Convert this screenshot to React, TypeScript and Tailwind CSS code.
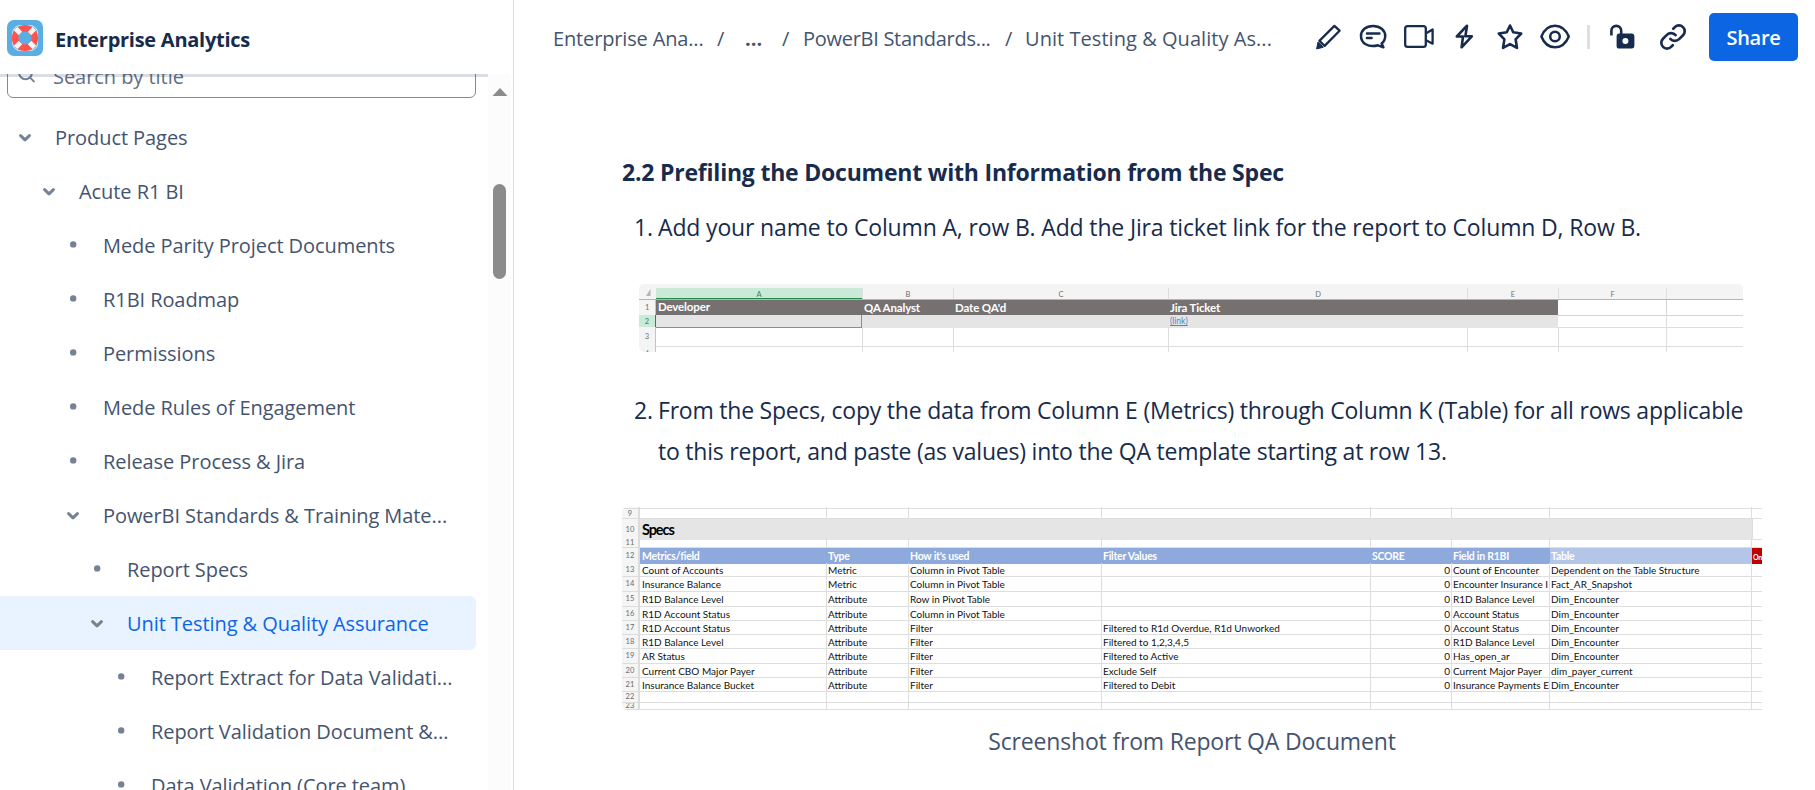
import React from "react";

type TreeNode = { label: string; kind: "open" | "leaf"; pad: string; active?: boolean };

const tree: TreeNode[] = [
  { label: "Product Pages", kind: "open", pad: "pl-[13px]" },
  { label: "Acute R1 BI", kind: "open", pad: "pl-[37px]" },
  { label: "Mede Parity Project Documents", kind: "leaf", pad: "pl-[61px]" },
  { label: "R1BI Roadmap", kind: "leaf", pad: "pl-[61px]" },
  { label: "Permissions", kind: "leaf", pad: "pl-[61px]" },
  { label: "Mede Rules of Engagement", kind: "leaf", pad: "pl-[61px]" },
  { label: "Release Process & Jira", kind: "leaf", pad: "pl-[61px]" },
  { label: "PowerBI Standards & Training Mate...", kind: "open", pad: "pl-[61px]" },
  { label: "Report Specs", kind: "leaf", pad: "pl-[85px]" },
  { label: "Unit Testing & Quality Assurance", kind: "open", pad: "pl-[85px]", active: true },
  { label: "Report Extract for Data Validati...", kind: "leaf", pad: "pl-[109px]" },
  { label: "Report Validation Document &...", kind: "leaf", pad: "pl-[109px]" },
  { label: "Data Validation (Core team)", kind: "leaf", pad: "pl-[109px]" },
];

function Marker({ kind }: { kind: "open" | "leaf" }) {
  return (
    <svg viewBox="0 0 24 24" className="h-6 w-6 shrink-0" fill="none">
      {kind === "open" ? (
        <path d="M7.6 10.6 L12 14.8 L16.4 10.6" stroke="#758195" strokeWidth="3" strokeLinecap="round" strokeLinejoin="round" />
      ) : (
        <circle cx="12.2" cy="11.4" r="3.2" fill="#758195" />
      )}
    </svg>
  );
}

function Lifebuoy() {
  return (
    <svg viewBox="0 0 36 36" className="h-9 w-9 shrink-0">
      <rect width="36" height="36" rx="7" fill="#59afe1" />
      <rect x="5.6" y="5.6" width="25" height="25" rx="7.5" fill="none" stroke="#e4f2fb" strokeWidth="0.9" />
      <circle cx="18" cy="18" r="9.8" fill="none" stroke="#ff5350" strokeWidth="6.6" />
      <g stroke="#f7f3f3" strokeWidth="5">
        <path d="M8.6 8.6 L13.4 13.4" />
        <path d="M27.4 8.6 L22.6 13.4" />
        <path d="M8.6 27.4 L13.4 22.6" />
        <path d="M27.4 27.4 L22.6 22.6" />
      </g>
    </svg>
  );
}

function Sidebar() {
  return (
    <aside className="flex h-[790px] w-[514px] shrink-0 flex-col border-r border-[#dcdfe4]">
      <div className="flex h-[74px] shrink-0 items-center gap-[12px] pt-[2px] pl-[7px]">
        <Lifebuoy />
        <span className="pt-[3px] text-[20px] font-bold tracking-[-0.26px] text-[#172b4d]">Enterprise Analytics</span>
      </div>
      <div className="flex min-h-0 flex-1">
        <div className="relative flex w-[488px] flex-col overflow-hidden">
          <div className="absolute inset-x-0 top-0 h-[3px] bg-[#091e42]/15" />
          <div className="-mt-[25px] ml-[7px] flex h-[49px] w-[469px] shrink-0 items-center rounded-[6px] border border-[#7f8a9d]">
            <svg viewBox="0 0 24 24" className="ml-[7px] h-6 w-6" fill="none" stroke="#758195" strokeWidth="2" strokeLinecap="round">
              <circle cx="10.5" cy="10.8" r="6.4" />
              <path d="M15.2 15.6 L18.8 19.4" />
            </svg>
            <span className="ml-[14px] pt-[6px] text-[20px] tracking-[-0.05px] text-[#626f86]">Search by title</span>
          </div>
          <div className="mt-[12px] flex flex-col">
            {tree.map((n) => (
              <div
                key={n.label}
                className={`flex h-[54px] w-[476px] shrink-0 items-center rounded-r-[6px] ${n.pad} ${n.active ? "bg-[#e9f2ff] text-[#0c66e4]" : "text-[#44546f]"}`}
              >
                <Marker kind={n.kind} />
                <span className="ml-[18px] pt-[2px] text-[20px] tracking-[-0.07px] whitespace-nowrap">{n.label}</span>
              </div>
            ))}
          </div>
        </div>
        <div className="flex w-[23px] flex-col items-center bg-[#fcfcfc] pt-[14px]">
          <svg viewBox="0 0 16 8" className="h-2 w-4">
            <path d="M8 0 L15.5 8 L0.5 8 Z" fill="#8b8b8b" />
          </svg>
          <div className="mt-[88px] h-[95px] w-[13px] rounded-full bg-[#8b8b8b]" />
        </div>
      </div>
    </aside>
  );
}

function Toolbar() {
  return (
    <div className="flex items-center text-[#172b4d]">
      <svg viewBox="1314 22.5 30 30" className="h-[30px] w-[30px]" fill="none" stroke="currentColor" strokeWidth="2.3" strokeLinejoin="round">
        <path d="M1334.4 26.4 L1339.6 31.2 L1324.6 46.4 L1319.4 41.4 Z" />
        <path d="M1318 42.6 L1323.2 47.8 L1316.6 49.4 Z" fill="currentColor" strokeWidth="1" />
      </svg>
      <svg viewBox="1357 22.5 32 30" className="ml-[13px] h-[30px] w-[32px]" fill="none" stroke="currentColor" strokeWidth="2.5" strokeLinecap="round" strokeLinejoin="round">
        <path d="M1383.4 47.8 L1378 45.8 C1368 48.6 1361 43.4 1361 36.4 C1361 30.6 1366 26.4 1373 26.4 C1380 26.4 1385.2 30.6 1385.2 36.4 C1385.2 39.6 1384 42 1381.6 44 Z" />
        <path d="M1367 34 H1379.4 M1367 38.6 H1371.6" />
      </svg>
      <svg viewBox="1402 22.5 34 30" className="ml-[13px] h-[30px] w-[34px]" fill="none" stroke="currentColor" strokeWidth="2.3" strokeLinejoin="round">
        <rect x="1405.2" y="26.6" width="20.6" height="20.8" rx="2.4" />
        <path d="M1426.6 33.6 L1432.6 30 V44.2 L1426.6 41" />
      </svg>
      <svg viewBox="1453 22.5 22 30" className="ml-[17px] h-[30px] w-[22px]" fill="none" stroke="currentColor" strokeWidth="2.6" strokeLinejoin="round">
        <path d="M1467 26.2 L1456.8 37 H1463 L1461.6 47.8 L1471.8 36.8 H1465.4 Z" />
      </svg>
      <svg viewBox="1495 22.5 30 30" className="ml-[20px] h-[30px] w-[30px]" fill="none" stroke="currentColor" strokeWidth="2.6" strokeLinejoin="round">
        <path d="M1510 26 L1513.2 32.8 L1521.2 34 L1515.6 39.8 L1517 48.4 L1510 44.6 L1503 48.4 L1504.4 39.8 L1498.8 34 L1506.8 32.8 Z" />
      </svg>
      <svg viewBox="1538 22.5 34 30" className="ml-[13px] h-[30px] w-[34px]" fill="none" stroke="currentColor" strokeWidth="2.5">
        <path d="M1541.4 37 C1544 30.4 1549 26.2 1555 26.2 C1561 26.2 1566 30.4 1568.8 37 C1566 43.8 1561 47.8 1555 47.8 C1549 47.8 1544 43.8 1541.4 37 Z" strokeLinejoin="round" />
        <circle cx="1555" cy="37" r="4.8" />
      </svg>
      <div className="ml-[15px] h-6 w-[3px] bg-[#dcdfe4]" />
      <svg viewBox="1608 22.5 30 30" className="ml-[18px] h-[30px] w-[30px]" fill="none" stroke="currentColor" strokeWidth="2.6">
        <path d="M1611.4 36 V31.2 A4.9 4.9 0 0 1 1621.2 31.2 V35" />
        <path d="M1618.8 34 H1632 A2.6 2.6 0 0 1 1634.4 36.4 V46.4 A2.6 2.6 0 0 1 1632 49 H1619.2 A2.6 2.6 0 0 1 1616.6 46.4 V36.4 A2.6 2.6 0 0 1 1618.8 34 Z M1625.4 38.5 A3 3 0 1 0 1625.4 44.5 A3 3 0 1 0 1625.4 38.5 Z" fill="currentColor" stroke="none" fillRule="evenodd" />
      </svg>
      <svg viewBox="0 0 24 24" className="ml-[19px] h-[32px] w-[32px]" fill="none" stroke="currentColor" strokeWidth="2" strokeLinecap="round">
        <path d="M10 13.4a4.6 4.6 0 0 0 6.6.2l2.9-2.9a4.3 4.3 0 0 0-6.1-6.1l-1.2 1.2" />
        <path d="M14 10.6a4.6 4.6 0 0 0-6.6-.2l-2.9 2.9a4.3 4.3 0 0 0 6.1 6.1l1.2-1.2" />
      </svg>
      <button className="ml-[20px] h-[48px] w-[89px] rounded-[5px] bg-[#0c66e4] pt-[2px] text-[20px] font-semibold tracking-[-0.3px] text-white">Share</button>
    </div>
  );
}

function TopBar() {
  return (
    <div className="flex h-[74px] shrink-0 items-center justify-between pr-[17px] pl-[39px]">
      <div className="flex items-center pt-[3px] text-[20px] whitespace-nowrap text-[#44546f]">
        <span className="w-[164px] tracking-[-0.15px]">Enterprise Ana...</span>
        <span className="w-[28px]">/</span>
        <span className="w-[37px] font-bold">...</span>
        <span className="w-[21px]">/</span>
        <span className="w-[202px] tracking-[-0.28px]">PowerBI Standards...</span>
        <span className="w-[20px]">/</span>
        <span className="tracking-[0.05px]">Unit Testing &amp; Quality As...</span>
      </div>
      <Toolbar />
    </div>
  );
}

const sheetACols = "grid grid-cols-[17px_206px_91px_215px_299px_91px_108px_1fr]";

function SheetA() {
  return (
    <div className="ml-[17px] flex h-[68px] w-[1104px] flex-col overflow-hidden rounded-[5px] bg-white font-[Lato,sans-serif]">
      <div className={`${sheetACols} h-[16px] border-b border-[#b5b5b5] bg-[#f4f4f4] pt-[4px] text-center text-[7.5px] leading-[13px] text-[#707070]`}>
        <svg viewBox="0 0 17 11" className="h-[11px] w-[17px]">
          <path d="M11.5 1 V8 H7 Z" fill="#b5b5b5" />
        </svg>
        <span className="h-[11px] border-b border-[#1f8b4d] bg-[#c9ead7] text-[#3f7f5c]">A</span>
        {["B", "C", "D", "E", "F", ""].map((c, i) => (
          <span key={i} className="h-[11px] border-l border-[#dedede]">{c}</span>
        ))}
      </div>
      <div className={`${sheetACols} h-[15px] text-[11.5px] leading-[16px] font-bold tracking-[-0.15px] text-white`}>
        <span className="border-r border-[#c4c4c4] bg-[#f4f4f4] text-center text-[7.5px] font-normal text-[#707070]">1</span>
        <span className="border-b border-[#1f8b4d] bg-[#767171] pl-[2px] leading-[14px]">Developer</span>
        <span className="bg-[#767171] pl-[2px]">QA Analyst</span>
        <span className="bg-[#767171] pl-[2px]">Date QA'd</span>
        <span className="bg-[#767171] pl-[2px]">Jira Ticket</span>
        <span className="bg-[#767171]" />
        <span className="border-b border-[#d4d4d4]" />
        <span className="border-b border-l border-[#d4d4d4]" />
      </div>
      <div className={`${sheetACols} h-[12px] text-[8.5px] leading-[14px]`}>
        <span className="border-r border-[#1f8b4d] bg-[#c9ead7] text-center text-[7.5px] leading-[13px] text-[#3f7f5c]">2</span>
        <span className="border-r border-b border-[#5ea67e] bg-[#e5e5e5]" />
        <span className="bg-[#e5e5e5]" />
        <span className="bg-[#e5e5e5]" />
        <span className="bg-[#e5e5e5] pl-[2px] leading-[13px] text-[#4a86cf] underline">(link)</span>
        <span className="bg-[#e5e5e5]" />
        <span className="border-b border-[#dedede]" />
        <span className="border-b border-l border-[#dedede]" />
      </div>
      <div className={`${sheetACols} h-[18px] text-[7.5px] leading-[20px]`}>
        <span className="border-r border-[#c4c4c4] bg-[#f4f4f4] text-center text-[#707070]">3</span>
        <span className="border-b border-[#dedede]" />
        {[0, 1, 2, 3, 4, 5].map((i) => (
          <span key={i} className="border-b border-l border-[#dedede]" />
        ))}
      </div>
      <div className={`${sheetACols} h-[7px] text-[7px] leading-[16px]`}>
        <span className="h-[7px] overflow-hidden border-r border-[#c4c4c4] bg-[#f4f4f4] text-center text-[#707070]">4</span>
        <span />
        {[0, 1, 2, 3, 4, 5].map((i) => (
          <span key={i} className="border-l border-[#dedede]" />
        ))}
      </div>
    </div>
  );
}

const sheetBCols = "grid grid-cols-[18px_187px_82px_193px_269px_81px_98px_202px_10px]";

type SpecRow = { n: number; h: string; cells: string[] };

const specs: SpecRow[] = [
  { n: 13, h: "h-[14px]", cells: ["Count of Accounts", "Metric", "Column in Pivot Table", "", "0", "Count of Encounter", "Dependent on the Table Structure", ""] },
  { n: 14, h: "h-[15px]", cells: ["Insurance Balance", "Metric", "Column in Pivot Table", "", "0", "Encounter Insurance I", "Fact_AR_Snapshot", ""] },
  { n: 15, h: "h-[15px]", cells: ["R1D Balance Level", "Attribute", "Row in Pivot Table", "", "0", "R1D Balance Level", "Dim_Encounter", ""] },
  { n: 16, h: "h-[14px]", cells: ["R1D Account Status", "Attribute", "Column in Pivot Table", "", "0", "Account Status", "Dim_Encounter", ""] },
  { n: 17, h: "h-[14px]", cells: ["R1D Account Status", "Attribute", "Filter", "Filtered to R1d Overdue, R1d Unworked", "0", "Account Status", "Dim_Encounter", ""] },
  { n: 18, h: "h-[14px]", cells: ["R1D Balance Level", "Attribute", "Filter", "Filtered to 1,2,3,4,5", "0", "R1D Balance Level", "Dim_Encounter", ""] },
  { n: 19, h: "h-[15px]", cells: ["AR Status", "Attribute", "Filter", "Filtered to Active", "0", "Has_open_ar", "Dim_Encounter", ""] },
  { n: 20, h: "h-[14px]", cells: ["Current CBO Major Payer", "Attribute", "Filter", "Exclude Self", "0", "Current Major Payer", "dim_payer_current", ""] },
  { n: 21, h: "h-[14px]", cells: ["Insurance Balance Bucket", "Attribute", "Filter", "Filtered to Debit", "0", "Insurance Payments E", "Dim_Encounter", ""] },
  { n: 22, h: "h-[11px]", cells: ["", "", "", "", "", "", "", ""] },
  { n: 23, h: "h-[7px]", cells: ["", "", "", "", "", "", "", ""] },
];

function RowNumber({ n }: { n: React.ReactNode }) {
  return (
    <span className="flex items-center justify-center overflow-hidden border-r-2 border-b border-[#dcdcdc] bg-[#f5f5f5] text-[7.5px] tracking-[0.2px] text-[#6b6b6b]">{n}</span>
  );
}

function EmptyCells() {
  return (
    <>
      {[0, 1, 2, 3, 4, 5, 6].map((i) => (
        <span key={i} className="border-r border-b border-[#dedede]" />
      ))}
      <span className="border-b border-[#dedede]" />
    </>
  );
}

function SheetB() {
  return (
    <div className="flex h-[203px] w-[1140px] flex-col overflow-hidden rounded-l-[5px] bg-white font-[Lato,sans-serif]">
      <div className={`${sheetBCols} h-[2px]`}>
        <RowNumber n="" />
        <EmptyCells />
      </div>
      <div className={`${sheetBCols} h-[10px]`}>
        <RowNumber n={9} />
        <EmptyCells />
      </div>
      <div className={`${sheetBCols} h-[19px]`}>
        <RowNumber n={10} />
        <span className="col-span-7 bg-[#e5e5e5] pl-[2px] text-[14.5px] leading-[21px] font-bold tracking-[-1.1px] text-black">Specs</span>
        <span className="border-b border-l border-[#dedede]" />
      </div>
      <div className={`${sheetBCols} h-[10px]`}>
        <RowNumber n={11} />
        <EmptyCells />
      </div>
      <div className={`${sheetBCols} h-[15px] text-[10.5px] leading-[16px] font-bold tracking-[-0.25px] text-white`}>
        <RowNumber n={<span className="font-normal">12</span>} />
        <span className="bg-[#8ea9db] pl-[2px]">Metrics/field</span>
        {["Type", "How it's used", "Filter Values", "SCORE", "Field in R1BI"].map((t) => (
          <span key={t} className="bg-[#8ea9db] pl-[1px]">{t}</span>
        ))}
        <span className="bg-[#b4c6e7] pl-[1px]">Table</span>
        <span className="overflow-hidden bg-[#c00000] pl-[1px] text-[7px] leading-[19px] whitespace-nowrap">On</span>
      </div>
      {specs.map((r) => (
        <div key={r.n} className={`${sheetBCols} ${r.h} text-[10px] leading-[14px] text-[#111111]`}>
          <RowNumber n={r.n} />
          {r.cells.map((c, i) => (
            <span
              key={i}
              className={`overflow-hidden border-b border-[#dedede] whitespace-nowrap ${i < 7 ? "border-r" : ""} ${i === 4 ? "pr-[1px] text-right" : i === 0 ? "pl-[2px]" : "pl-[1px]"}`}
            >
              {c}
            </span>
          ))}
        </div>
      ))}
    </div>
  );
}

export default function App() {
  return (
    <div className="flex h-[790px] w-[1815px] overflow-hidden bg-white font-['Open_Sans',sans-serif]">
      <Sidebar />
      <main className="flex min-w-0 flex-1 flex-col">
        <TopBar />
        <article className="flex flex-col pl-[108px] text-[23px] leading-[41px] whitespace-nowrap text-[#172b4d]">
          <h3 className="mt-[78px] text-[23px] font-bold tracking-[-0.21px]">2.2 Prefiling the Document with Information from the Spec</h3>
          <div className="mt-[14px] flex pl-[12px] tracking-[-0.155px]">
            <span className="w-[24px]">1.</span>
            <span>Add your name to Column A, row B. Add the Jira ticket link for the report to Column D, Row B.</span>
          </div>
          <div className="mt-[36px]">
            <SheetA />
          </div>
          <div className="mt-[38px] flex pl-[12px] tracking-[-0.22px]">
            <span className="w-[24px]">2.</span>
            <span>
              From the Specs, copy the data from Column E (Metrics) through Column K (Table) for all rows applicable
              <br />
              to this report, and paste (as values) into the QA template starting at row 13.
            </span>
          </div>
          <div className="mt-[35px]">
            <SheetB />
          </div>
          <p className="mt-[11px] w-[1140px] text-center tracking-[-0.18px] text-[#44546f]">Screenshot from Report QA Document</p>
        </article>
      </main>
    </div>
  );
}
